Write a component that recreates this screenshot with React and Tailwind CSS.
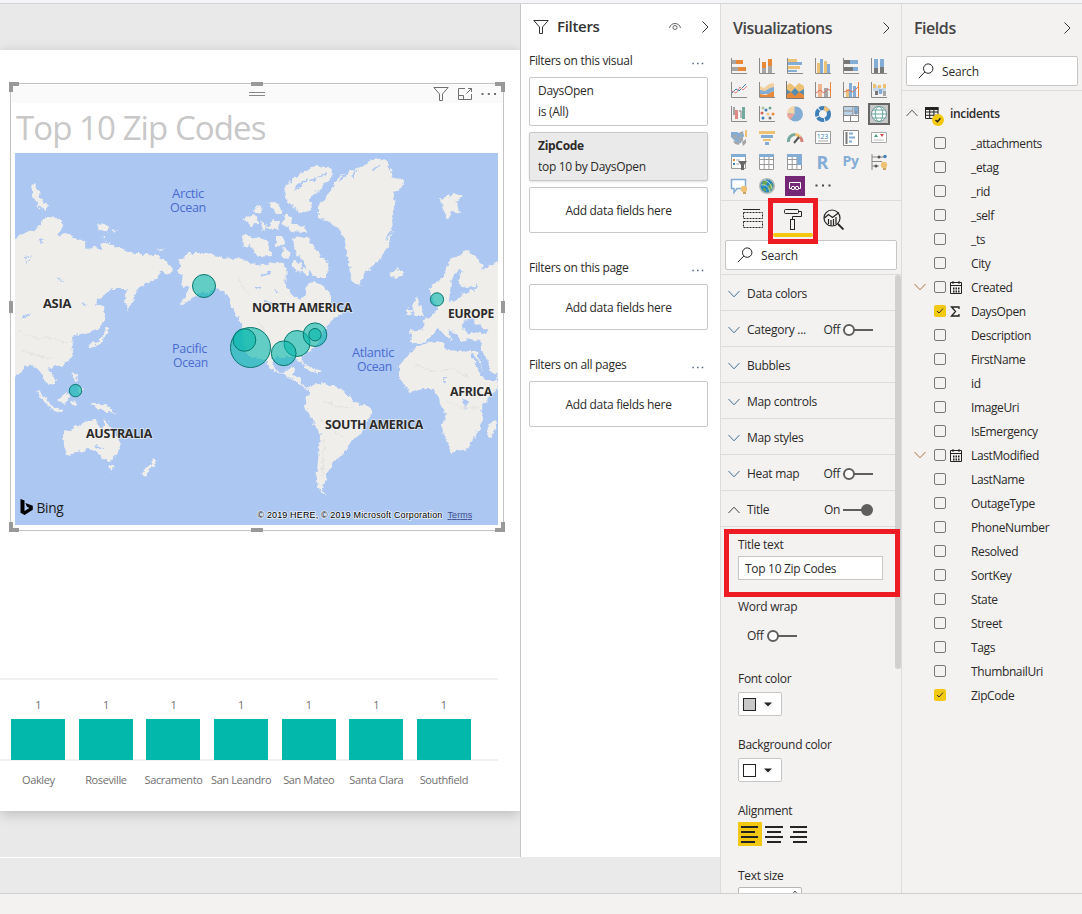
import React from "react";

const LAND = [
  "15,238 27,232 33,230 41,225 46,217 52,216 60,220 63,227 58,236 66,232 77,239 84,240 86,249 94,248 101,249 103,241 116,246 128,251 140,254 156,255 167,263 173,270 169,275 162,271 156,278 148,283 138,288 133,300 128,310 125,300 127,289 113,289 101,297 95,304 104,308 106,317 100,327 90,333 80,334 72,337 73,347 72,357 63,365 48,368 56,380 52,386 47,383 42,377 40,371 32,365 25,367 16,376 5,378 5,238",
  "31,186 36,185 39,192 40,198 48,206 46,211 40,208 34,199",
  "97,225 104,224 110,227 107,231 99,230", "110,229 117,230 114,232",
  "100,236 106,237 106,240", "157,249 164,248 162,251",
  "57,400 63,395 68,392 69,398 65,404 58,402",
  "72,372 76,374 77,382 74,379", "79,386 83,390 80,393 78,390",
  "90,402 100,404 108,406 115,414 107,412 101,411 95,406",
  "72,400 77,402 75,407 71,405",
  "63,433 78,425 88,420 97,419 98,426 103,428 105,418 109,425 115,433 121,443 117,455 110,461 102,459 97,452 88,449 80,452 67,455 64,445",
  "108,466 114,466 111,471",
  "151,457 156,461 155,466 150,468 145,477 141,475 149,465 152,463",
  "180,260 190,253 207,253 220,257 230,259 240,258 250,263 262,265 275,262 283,263 287,270 286,277 285,285 293,297 301,300 305,295 308,283 317,282 325,287 330,297 333,306 342,314 336,317 330,323 324,329 320,338 315,347 307,353 302,357 304,365 300,361 294,357 285,357 271,358 275,369 283,374 287,369 294,367 293,375 300,377 302,385 309,387 316,386 308,390 300,384 291,378 280,374 271,369 265,360 257,359 248,355 242,340 242,327 238,317 231,307 227,294 217,288 208,292 203,291 190,300 179,306 185,298 190,288 181,285 183,277 178,271",
  "318,207 328,195 335,183 340,176 353,170 365,165 375,158 387,161 390,170 392,178 405,181 402,188 393,193 395,203 392,217 393,230 387,247 383,257 367,270 360,285 353,285 350,270 347,257 345,240 340,230 330,222 318,217",
  "284,187 300,173 317,165 332,169 331,179 318,190 310,198 312,210 300,213 293,207 287,200",
  "292,238 308,237 317,250 330,267 325,278 318,278 310,272 303,260 296,254",
  "242,234 252,237 267,240 272,256 258,257 250,245 244,248", "243,219 254,215 260,222 251,226 247,222",
  "258,206 263,208 260,214 253,211", "269,202 278,203 283,214 276,214", "285,214 292,217 291,228 282,226",
  "272,219 279,221 278,230 267,228", "289,224 305,226 306,232 289,231", "276,236 283,236 284,244 276,247", "283,246 291,252 288,260 282,255",
  "308,284 318,284 321,296 313,296", "303,267 310,269 307,276 302,272", "292,261 299,262 303,271 296,273", "262,222 267,224 266,231 261,228",
  "389,273 398,269 404,273 397,278 391,277",
  "440,199 447,197 453,193 463,196 456,202 460,213 453,211 448,219 443,208",
  "430,288 443,277 450,260 467,251 480,260 482,270 498,261 510,260 510,450 498,387 497,380 490,370 485,355 480,350 470,351 460,350 443,343 430,342 420,343 411,342 410,331 425,329 423,320 432,315 438,309 434,300 431,297",
  "412,306 417,296 420,305 425,316 415,316", "408,309 413,310 411,316 406,314",
  "417,346 428,343 443,343 446,350 463,351 478,352 480,362 486,379 497,380 497,388 482,406 483,420 475,437 467,449 451,453 442,428 446,414 440,404 439,396 433,389 422,389 410,392 399,379 399,367 407,356",
  "495,419 497,424 492,438 487,436 488,426",
  "310,386 322,383 337,387 350,396 353,402 371,408 371,414 363,426 362,433 350,442 345,451 338,459 332,463 332,467 327,474 325,482 321,489 327,496 319,491 316,480 318,460 320,434 312,419 305,407 308,397",
];
const WATER = [
  "451,281 457,269 463,270 459,281 464,288 474,287 478,283 478,288 464,293 456,300 449,302",
  "464,321 472,318 476,324 490,330 484,334 468,333 462,328",
  "430,337 438,328 446,336 452,341 447,328 455,333 463,343 467,338 482,342 480,351 463,351 448,349 443,342 425,342",
  "470,354 473,353 487,377 497,374 498,380 484,380",
  "463,398 468,402 465,410",
  "443,375 446,378 444,384",
];
const LINES = ["107,328 105,335 100,342 90,346", "38,391 45,400 52,408 63,411", "304,366 311,369 320,372", "302,322 307,319 305,326"];
const BUBBLES = [[204, 286, 11.5], [250.5, 347.5, 20], [244.5, 340, 11.3], [297, 343.5, 13], [315, 334.7, 11.8], [315, 334.7, 6.2], [283.7, 353.3, 12.4], [437, 299.4, 6.6], [75.5, 390.6, 6.2]];
const PLACES = [[43, 308, 28, "ASIA"], [252, 312, 100, "NORTH AMERICA"], [448, 318, 46, "EUROPE"], [450, 396, 42, "AFRICA"], [325, 429, 98, "SOUTH AMERICA"], [86, 438, 66, "AUSTRALIA"]];
const SEAS = [
  [[172, 198, 32, "Arctic"], [170, 212, 36, "Ocean"]],
  [[172, 353, 35, "Pacific"], [173, 367, 35, "Ocean"]],
  [[352, 356.5, 42, "Atlantic"], [357, 370.5, 35, "Ocean"]],
];

function WorldMap() {
  return (
    <svg className="block h-[372px] w-[483px]" viewBox="15 153 483 372">
      <defs>
        <filter id="coast" x="-5%" y="-5%" width="110%" height="110%">
          <feTurbulence type="fractalNoise" baseFrequency="0.22" numOctaves="3" seed="4" />
          <feDisplacementMap in="SourceGraphic" scale="6" xChannelSelector="R" yChannelSelector="G" />
          <feGaussianBlur stdDeviation="0.35" />
        </filter>
      </defs>
      <rect x="15" y="153" width="483" height="372" fill="#acc7f2" />
      <g filter="url(#coast)">
        {LAND.map((p) => <polygon key={p} points={p} fill="#efeeeb" />)}
        {WATER.map((p) => <polygon key={p} points={p} fill="#acc7f2" />)}
        {LINES.map((p) => <polyline key={p} points={p} fill="none" stroke="#efeeeb" strokeWidth="3" />)}
        <path d="M15 330l20 8 18 0 14 6M20 350l18 6 14 2M320 420l12 8 10 10M322 400l14 6 16 2M415 365l18 6 20-2 16 8M445 400l16 8 18 0M258 320l8 14M236 275l12 20M324 440l-2 36" fill="none" stroke="#e2e1de" strokeWidth="1" />
        <path d="M25 258l6-2M26 262l4-1M56 279l7 2M82 303l4 2M22 318l8-4M40 240l3 2M262 275l9-3M274 291l5 2M264 302l7 1M255 287l5 2M327 173l-16 8M308 178l-14 12M340 180l8-8M352 178l4-8M372 170l8-5M386 240l6-10M95 446l8 2" fill="none" stroke="#acc7f2" strokeWidth="1.8" />
      </g>
      {BUBBLES.map(([x, y, r], i) => <circle key={i} cx={x} cy={y} r={r} fill="#01b8aa" fillOpacity="0.6" stroke="#08786f" strokeWidth="1" />)}
      {PLACES.map(([x, y, w, t]) => <text key={t} x={x} y={y} textLength={w} lengthAdjust="spacingAndGlyphs" fill="#2b2b2b" stroke="#f5f5f3" strokeWidth="1.5" strokeOpacity="0.7" paintOrder="stroke" className="font-['Open_Sans',sans-serif] text-[12px] font-bold">{t}</text>)}
      {SEAS.map((lines, i) => (
        <text key={i} fill="#4a6bd0" className="font-['Open_Sans',sans-serif] text-[12px]">
          {lines.map(([x, y, w, t]) => <tspan key={t} x={x} y={y} textLength={w} lengthAdjust="spacingAndGlyphs">{t}</tspan>)}
        </text>
      ))}
      <path d="M20.5 499l4 1.5v10.5l5-3-2.500-1.200-1.600-3.800 7.400 2.700v4l-8.300 5.300-4-2.200z" fill="#000" />
      <text x="36.5" y="513" textLength="27" lengthAdjust="spacingAndGlyphs" fill="#1b1b1b" className="font-['Open_Sans',sans-serif] text-[14.5px]">Bing</text>
      <text x="257.5" y="518" textLength="184.500" fill="#000" stroke="#fff" strokeWidth="1.6" strokeOpacity="0.7" paintOrder="stroke" className="font-['Liberation_Sans',sans-serif] text-[9px]">© 2019 HERE, © 2019 Microsoft Corporation</text>
      <text x="447.500" y="518" textLength="24.5" fill="#3b4a8c" textDecoration="underline" className="font-['Liberation_Sans',sans-serif] text-[9px]">Terms</text>
    </svg>
  );
}

const Funnel = ({ className }) => (
  <svg className={className} viewBox="0 0 16 16" fill="none" stroke="currentColor"><path d="M.8 1.5h14.4L9.5 8v6.500h-3V8z" /></svg>
);
const Dots = ({ className }) => (
  <svg className={className} viewBox="0 0 16 4" fill="currentColor"><rect x="0.500" y="1" width="2" height="2" /><rect x="6.800" y="1" width="2" height="2" /><rect x="13" y="1" width="2" height="2" /></svg>
);
const Right = () => <svg className="h-3 w-[8px]" viewBox="0 0 8 12" fill="none" stroke="#333"><path d="M1.500 .5L7 6 1.500 11.500" /></svg>;
const Chev = ({ up, color = "#3f6f96" }) => (
  <svg className="h-2 w-3" viewBox="0 0 12 8" fill="none" stroke={color}><path d={up ? "M.5 7L6 1.200 11.500 7" : "M.5 1L6 6.800 11.500 1"} /></svg>
);
const Lens = () => <svg className="h-4 w-4" viewBox="0 0 16 16" fill="none" stroke="#222"><circle cx="10.200" cy="5.600" r="4.700" /><path d="M6.800 9L.8 15.200" /></svg>;

function Visual() {
  return (
    <div className="relative mt-[33px] ml-[10px] h-[448px] w-[494px] border border-[#c4c4c4] bg-white">
      <div className="flex h-[19px] items-center bg-[#fafafa] text-[#6f6f6f]">
        <div className="ml-[238px] h-[4px] w-4 border-y border-[#888]" />
        <div className="ml-auto flex items-center gap-[9px] pr-[6px]">
          <Funnel className="h-4 w-4" />
          <svg className="h-[14px] w-[14px]" viewBox="0 0 14 14" fill="none" stroke="currentColor"><path d="M7 1.500H.5v11h13V7M.5 8.500h5v4M8.500 6.500l5-5M10 1.500h3.500V5" /></svg>
          <Dots className="h-1 w-4" />
        </div>
      </div>
      <div className="ml-[5px] flex h-[49px] items-center whitespace-nowrap font-['Open_Sans',sans-serif] text-[33px] tracking-[-0.920px] text-[#c8c8c8]">Top 10 Zip Codes</div>
      <div className="mt-px ml-[4px]"><WorldMap /></div>
      <span className="absolute -top-[2px] -left-[2px] h-[10px] w-[10px] border-t-4 border-l-4 border-[#999]" />
      <span className="absolute -top-[2px] -right-[2px] h-[10px] w-[10px] border-t-4 border-r-4 border-[#999]" />
      <span className="absolute -bottom-[2px] -left-[2px] h-[10px] w-[10px] border-b-4 border-l-4 border-[#999]" />
      <span className="absolute -right-[2px] -bottom-[2px] h-[10px] w-[10px] border-r-4 border-b-4 border-[#999]" />
      <span className="absolute -top-[2px] left-[240px] h-1 w-3 bg-[#999]" />
      <span className="absolute -bottom-[2px] left-[240px] h-1 w-3 bg-[#999]" />
      <span className="absolute top-[217px] -left-[2px] h-3 w-1 bg-[#999]" />
      <span className="absolute top-[217px] -right-[2px] h-3 w-1 bg-[#999]" />
    </div>
  );
}

const CITIES = ["Oakley", "Roseville", "Sacramento", "San Leandro", "San Mateo", "Santa Clara", "Southfield"];
function Chart() {
  return (
    <div className="mt-[147px] w-[498px] border-t-2 border-[#f1f1f1] text-[11px] text-[#707070]">
      <div className="flex h-[81px] items-end border-b-2 border-[#f1f1f1] pl-[4.500px]">
        {CITIES.map((c) => (
          <div key={c} className="flex w-[67.600px] shrink-0 flex-col items-center">
            <span className="mb-[6px] leading-4">1</span>
            <div className="-mb-px h-[41px] w-[54px] bg-[#01b8aa]" />
          </div>
        ))}
      </div>
      <div className="flex pt-[11px] pl-[4.500px]">
        {CITIES.map((c) => <span key={c} className="w-[67.600px] shrink-0 text-center leading-4 tracking-[-0.380px] whitespace-nowrap">{c}</span>)}
      </div>
    </div>
  );
}

const FilterHead = ({ children }) => (
  <div className="flex h-4 items-center justify-between pr-1"><span>{children}</span><Dots className="mt-1 h-[3px] w-[12px] text-[#4b6588]" /></div>
);
const AddField = () => <div className="flex h-[46px] items-center justify-center rounded-[2px] border border-[#c8c8c8] bg-white pt-[2px]">Add data fields here</div>;

function Filters() {
  return (
    <section className="h-[853px] w-[200px] shrink-0 border-l border-[#c8c8c8] bg-white pr-3 pl-2">
      <div className="flex h-[45px] items-center pl-1">
        <Funnel className="h-4 w-4 text-[#333]" />
        <h2 className="ml-2 text-[15px] font-semibold tracking-[-0.300px] text-[#333]">Filters</h2>
        <svg className="ml-auto h-3 w-3" viewBox="0 0 12 12" fill="none" stroke="#666"><path d="M.5 7C1.500 1 10.500 1 11.500 7" /><circle cx="6" cy="6.500" r="2" /></svg>
        <span className="ml-[20px] -mr-[1px]"><Right /></span>
      </div>
      <div className="mt-1"><FilterHead>Filters on this visual</FilterHead></div>
      <div className="mt-2 flex h-[49px] flex-col justify-center rounded-[2px] border border-[#c8c8c8] pb-[2px] pl-2 leading-[21px]"><span>DaysOpen</span><span>is (All)</span></div>
      <div className="mt-[6px] flex h-[49px] flex-col justify-center rounded-[2px] border border-[#c8c8c8] bg-[#eaeaea] pb-[2px] pl-2 leading-[21px] shadow-sm"><b className="font-bold">ZipCode</b><span>top 10 by DaysOpen</span></div>
      <div className="mt-[6px]"><AddField /></div>
      <div className="mt-[27px]"><FilterHead>Filters on this page</FilterHead></div>
      <div className="mt-2"><AddField /></div>
      <div className="mt-[27px]"><FilterHead>Filters on all pages</FilterHead></div>
      <div className="mt-2"><AddField /></div>
    </section>
  );
}

const O = "#e8893a", B = "#84add6", G = "#a6a6a6", D = "#777", Y = "#eec274", N = "#3d7fb8";
const Ax = () => <path d="M1.500 1v15.500H17" fill="none" stroke="#8a8a8a" />;
const R = ({ x, y, w, h, f }) => <rect x={x} y={y} width={w} height={h} fill={f} />;
const TableIcon = ({ accent }) => <g><path d="M1.500 1.500h14v15h-14zM1.500 6.500h14M1.500 11.500h14M6.200 1.500v15M10.900 1.500v15" fill="#fff" stroke="#999" /><R x={1} y={1} w={15} h={3} f={B} />{accent && <R x={11} y={4} w={5} h={8} f={B} />}</g>;
const ICONS = [
  <><Ax /><R x={2} y={3} w={4} h={4} f={G} /><R x={6} y={3} w={7} h={4} f={O} /><R x={2} y={10} w={6} h={4} f={G} /><R x={8} y={10} w={8} h={4} f={O} /></>,
  <><Ax /><R x={4} y={5} w={4} h={6} f={O} /><R x={4} y={11} w={4} h={5} f={G} /><R x={10} y={2} w={4} h={7} f={O} /><R x={10} y={9} w={4} h={7} f={G} /></>,
  <><Ax /><R x={2} y={2} w={9} h={3} f={Y} /><R x={2} y={5} w={14} h={3} f={B} /><R x={2} y={9} w={12} h={3} f={Y} /><R x={2} y={13} w={9} h={2} f={B} /></>,
  <><Ax /><R x={3} y={6} w={3} h={10} f={Y} /><R x={6} y={2} w={3} h={14} f={B} /><R x={10} y={4} w={3} h={12} f={Y} /><R x={13} y={7} w={3} h={9} f={B} /></>,
  <><Ax /><R x={2} y={3} w={6} h={4} f={D} /><R x={8} y={3} w={8} h={4} f={B} /><R x={2} y={10} w={9} h={4} f={D} /><R x={11} y={10} w={5} h={4} f={B} /></>,
  <><Ax /><R x={4} y={2} w={4} h={9} f={B} /><R x={4} y={11} w={4} h={5} f={D} /><R x={10} y={2} w={4} h={8} f={B} /><R x={10} y={10} w={4} h={6} f={D} /></>,
  <><Ax /><path d="M2 12l4-4 3 2 7-7" fill="none" stroke={N} /><path d="M2 10l4 2 4-6 3 3 4-4" fill="none" stroke="#e18b86" /></>,
  <><Ax /><path d="M2 5l4 2 5-4 5-1v7l-5 3-5-1-4 1z" fill="#f2cf9c" /><path d="M2 9l5 1 5-3 4-1v4l-5 3H2z" fill={B} /><path d="M2 13l6 1 8-4v6H2z" fill={O} /></>,
  <><path d="M0 5l4-3 5 4 4-4 5 3v7H0z" fill={Y} /><path d="M0 8l5 3 4-4 4 4 5-3v8H0z" fill="#548cb3" /><path d="M0 14l5-3 4 4 4-4 5 3v3H0z" fill={O} /><path d="M.5 0v17.500H18" fill="none" stroke="#777" /></>,
  <><Ax /><R x={4} y={3} w={4} h={13} f="#efb68d" /><R x={10} y={7} w={4} h={9} f={G} /><path d="M2 12l4-3 4 3 4-4 3 2" fill="none" stroke="#df6f61" /><path d="M16.500 1v15" stroke={O} /></>,
  <><Ax /><R x={4} y={8} w={3} h={8} f={Y} /><R x={7} y={2} w={3} h={14} f={B} /><R x={11} y={5} w={3} h={11} f={B} /><path d="M2 11l5-2 4 2 5-5" fill="none" stroke="#df6f61" /><path d="M16.500 1v15" stroke={O} /></>,
  <><Ax /><path d="M3 4h3l5 4 5-3v4l-5 4-5-3H3z" fill="#c8d7e5" /><R x={3} y={3} w={3} h={4} f={Y} /><R x={8} y={4} w={3} h={3} f={Y} /><R x={13} y={3} w={3} h={4} f={Y} /><R x={5} y={10} w={3} h={4} f={D} /><R x={9} y={8} w={3} h={5} f={B} /><R x={13} y={10} w={3} h={5} f={G} /></>,
  <><Ax /><R x={3} y={2} w={2} h={8} f={G} /><R x={5} y={5} w={3} h={9} f="#df8a83" /><R x={9} y={6} w={3} h={8} f="#fff" /><path d="M9 6h2v7" stroke={D} fill="none" /><R x={12} y={2} w={3} h={12} f="#72aaa0" /></>,
  <><Ax />{[[4, 8, "#d16359"], [12, 3, "#6da79a"], [5, 13, N], [8, 5, N], [10, 9, Y], [15, 9, O], [12, 13, D], [5, 3, "#a8c5a0"]].map(([x, y, f]) => <circle key={x + "-" + y} cx={x} cy={y} r="1.500" fill={f} />)}</>,
  <><circle cx="9.500" cy="9" r="7.500" fill={B} /><path d="M8.500 9V1A7.500 7.500 0 001 8z" fill="#f3d7aa" /><path d="M8.500 9L1 8.500a8 8 0 003.500 6.500z" fill="#e8a49a" /></>,
  <><circle cx="9" cy="9" r="6" fill="none" stroke={N} strokeWidth="4" strokeDasharray="7 1" /><path d="M10 3a6 6 0 014 3" stroke={Y} strokeWidth="4" fill="none" /></>,
  <><path d="M1.500 1.500h15v15h-15z" fill="#fff" /><R x={2} y={2} w={9} h={8} f="#bcd2e7" /><R x={12} y={2} w={4} h={7} f={B} /><path d="M1.500 1.500h15v15h-15zM1.500 6h9M1.500 10.500h15M11 1.500v9M8.500 10.500v6M14 6v4" fill="none" stroke="#888" /></>,
  <g fill="none" stroke="#64a59a"><circle cx="9" cy="9" r="7.500" fill="#fff" stroke="#73939a" /><ellipse cx="9" cy="9" rx="3.800" ry="7.500" /><path d="M1.500 9h15M3 5h12M3 13h12" /></g>,
  <><path d="M1 3h6l2 1 4-2 1 5-2 3-1 4-4 1-3-4-3-3z" fill={B} /><path d="M2 6h5v3l-3 1zM8 8h5v4l-4 1zM10 3h3v3h-3z" fill="#a4a9ac" /><path d="M3 12l6 1v3l-4-1zM12 13l4-3v4l-3 3z" fill={G} /><R x={15} y={1} w={2} h={7} f={Y} /></>,
  <><R x={1} y={2} w={16} h={3} f={Y} /><R x={3} y={6} w={12} h={3} f={B} /><R x={5} y={10} w={8} h={2} f={Y} /><R x={7} y={13} w={4} h={3} f={B} /></>,
  <><path d="M2.500 13A6.500 6.500 0 019 5.500" stroke="#76aaa0" strokeWidth="3" fill="none" /><path d="M9 5.500A6.500 6.500 0 0114 8" stroke={Y} strokeWidth="3" fill="none" /><path d="M14 8a7 7 0 012 5" stroke="#d58378" strokeWidth="3" fill="none" /><path d="M8 14l5-6" stroke="#555" strokeWidth="2" /></>,
  <><path d="M1.500 2.500h15v12h-15z" fill="#fff" stroke="#999" /><text x="2.800" y="9.500" fill={N} className="font-['Open_Sans',sans-serif] text-[7px]">123</text><path d="M4 12h10" stroke="#aaa" /></>,
  <><path d="M1.500 1.500h15v15h-15z" fill="#fff" stroke="#888" /><path d="M4.500 3v12" stroke="#777" strokeWidth="2" /><path d="M7 4.500h4M7 8.500h6M7 12.500h3" stroke={B} strokeWidth="2" /></>,
  <><path d="M1.500 3.500h15v10h-15z" fill="#fff" stroke="#aaa" /><path d="M4 8l2-3 2 3z" fill="#4b9a7d" /><path d="M10 5h4l-2 3z" fill="#cf4d43" /><path d="M4 11h10" stroke="#bbb" /></>,
  <><path d="M1.500 1.500h14v14h-14z" fill="#fff" stroke="#999" /><R x={1} y={1} w={15} h={3} f={B} /><R x={3} y={6} w={2} h={2} f={O} /><R x={3} y={10} w={2} h={2} f={N} /><path d="M6 7h4M6 11h3" stroke="#aaa" /><path d="M8 8h9l-3 4v5h-3v-5z" fill="#666" /></>,
  <TableIcon />, <TableIcon accent />,
  <text x="2.500" y="15.500" fill={B} className="font-['Open_Sans',sans-serif] text-[18px] font-bold">R</text>,
  <text x="0.500" y="13" fill={B} className="font-['Open_Sans',sans-serif] text-[14px] font-bold">Py</text>,
  <><path d="M2 1v16M2 4h13M2 8.500h10M2 13h7" stroke="#888" fill="none" /><circle cx="15" cy="3.500" r="1.700" fill={N} /><circle cx="9" cy="4" r="1.500" fill="#555" /><circle cx="6" cy="13" r="1.500" fill="#555" /><circle cx="14" cy="12" r="3.200" fill={Y} /><R x={13} y={15} w={3} h={2} f="#c9a361" /></>,
  <><path d="M1.500 2.500h14v9H7l-3 4v-4H1.500z" fill="#fff" stroke={B} strokeWidth="1.500" /><circle cx="14" cy="12" r="3.200" fill={Y} /><R x={13} y={15} w={3} h={2} f="#c9a361" /></>,
  <><circle cx="9" cy="9" r="8" fill="#b5b9b5" /><circle cx="9" cy="9" r="6.500" fill="#268ac0" /><path d="M5 4l5 0-2 4-4 1zM10 9l4-3 1 5-4 4zM5 11l3 1 0 3-3-2z" fill="#6fa552" /><path d="M3 8c5-1 8 2 9 7M6 3c4 1 7 4 8 9" fill="none" stroke="#e7eff0" strokeWidth="0.700" /></>,
  <><R x={-1} y={-1} w={20} h={20} f="#742774" /><path d="M5 11.500H3.500v-6h11v6H13" fill="none" stroke="#fff" /><circle cx="7" cy="11" r="1.700" fill="none" stroke="#fff" /><circle cx="11" cy="11" r="1.700" fill="none" stroke="#fff" /></>,
  <g fill="#444"><rect x="1.500" y="7.500" width="2" height="2" /><rect x="8" y="7.500" width="2" height="2" /><rect x="14.500" y="7.500" width="2" height="2" /></g>,
];

const Toggle = ({ on }) => (
  <span className="flex items-center gap-[3px]"><span>{on ? "On" : "Off"}</span>
    <svg className="h-3 w-[30px]" viewBox="0 0 30 12" stroke="#605e5c" strokeWidth="2">{on ? <><path d="M0 6h20" /><circle cx="24" cy="6" r="5" fill="#605e5c" /></> : <><path d="M11 6h19" /><circle cx="6" cy="6" r="5" fill="#fff" /></>}</svg>
  </span>
);
const SECTIONS = [["Data colors"], ["Category ...", "off"], ["Bubbles"], ["Map controls"], ["Map styles"], ["Heat map", "off"], ["Title", "on"]];
const Swatch = ({ gray }) => (
  <div className="flex h-6 w-11 items-center rounded-[2px] border border-[#c8c6c4] bg-white pl-1">
    <span className={gray ? "h-[13px] w-[13px] border border-[#222] bg-[#c8c8c8]" : "h-[13px] w-[13px] border border-[#222] bg-white"} />
    <svg className="ml-2 h-[5px] w-2" viewBox="0 0 8 5"><path d="M0 .5h8L4 4.500z" fill="#222" /></svg>
  </div>
);
const Align = ({ d, active }) => (
  <span className={active ? "flex h-6 w-6 items-center justify-center bg-[#f2c811]" : "flex h-6 w-6 items-center justify-center"}><svg className="h-[18px] w-[18px]" viewBox="0 0 18 18" stroke="#252423" strokeWidth="2"><path d={d} /></svg></span>
);
const Search = () => <div className="flex h-[30px] w-[172px] items-center gap-2 rounded-[2px] border border-[#c8c6c4] bg-white pl-[11px]"><Lens /><span className="pt-[2px] tracking-[-0.200px]">Search</span></div>;

function Visualizations() {
  return (
    <section className="relative h-[889px] w-[181px] shrink-0 overflow-hidden border-l border-[#dcdcdc] bg-[#f3f2f1]">
      <div className="flex h-[50px] items-center justify-between pr-[11px] pl-3"><h2 className="pb-[2px] text-[16px] font-semibold tracking-[-0.500px] text-[#444]">Visualizations</h2><span className="pb-[2px]"><Right /></span></div>
      <div className="ml-1 grid h-[146px] auto-rows-[24px] grid-cols-[repeat(6,28px)]">
        {ICONS.map((icon, i) => (
          <div key={i} className="flex items-center justify-center">
            <span className={i === 17 ? "flex h-[22px] w-[22px] items-center justify-center border-2 border-[#666] bg-[#c8c8c8]" : "flex h-[22px] w-[22px] items-center justify-center"}><svg className="h-[18px] w-[18px] shrink-0 overflow-visible" viewBox="0 0 18 18">{icon}</svg></span>
          </div>
        ))}
      </div>
      <div className="flex h-[40px] items-start gap-5 border-t border-[#dcdcdc] pt-2 pl-[22px] text-[#252423]">
        <svg className="h-5 w-5" viewBox="0 0 20 20" fill="none" stroke="currentColor"><path d="M0 .5h17" /><path d="M.5 3.500v6h19v-6M.5 12.500v6h19v-6M.5 3.500h19M.5 12.500h19" strokeDasharray="2 1" /></svg>
        <svg className="h-[22px] w-5" viewBox="0 0 20 22" fill="none" stroke="currentColor"><rect x="1.500" y="0.500" width="14" height="4" rx="1" /><path d="M15.500 2.500h3v5h-9v3" /><rect x="7.500" y="10.500" width="4" height="10" /></svg>
        <svg className="h-[21px] w-[21px]" viewBox="0 0 21 21" fill="none" stroke="currentColor" strokeWidth="1.200"><circle cx="9" cy="9" r="8" /><path d="M15 15l5.500 5.500" strokeWidth="1.800" /><path d="M1.500 9l4-3.500 4 3 6.500-5M5.500 10v5M8 11v6M10.500 10v6.500M13 8v7" /></svg>
      </div>
      <div className="flex h-[34px] items-start pl-1"><Search /></div>
      <div className="border-t border-[#dcdcdc]">
        {SECTIONS.map(([name, state]) => (
          <div key={name} className="flex h-9 items-center border-b border-[#dcdcdc] pt-[2px] pl-[7px]">
            <Chev up={state === "on"} color={state === "on" ? "#444" : "#3f6f96"} /><span className="ml-[7px] flex-1">{name}</span>
            {state && <span className="mr-[28px]"><Toggle on={state === "on"} /></span>}
          </div>
        ))}
      </div>
      <div className="flex flex-col items-start pt-[10px] pl-[17px] leading-4">
        <span>Title text</span>
        <div className="mt-[3px] flex h-6 w-[145px] items-center border border-[#c8c6c4] bg-white pt-[2px] pl-[6px]">Top 10 Zip Codes</div>
        <span className="mt-[19px]">Word wrap</span>
        <div className="mt-[13px] ml-[9px]"><Toggle /></div>
        <span className="mt-[27px]">Font color</span>
        <div className="mt-[5px]"><Swatch gray /></div>
        <span className="mt-[21px]">Background color</span>
        <div className="mt-[5px]"><Swatch /></div>
        <span className="mt-[21px]">Alignment</span>
        <div className="mt-[3px] flex"><Align active d="M0 2h17M0 7h14M0 12h17M0 17h14" /><Align d="M0 2h18M2 7h14M0 12h18M2 17h14" /><Align d="M1 2h17M4 7h14M1 12h17M4 17h14" /></div>
        <span className="mt-[22px]">Text size</span>
        <div className="mt-[3px] flex h-6 w-16 justify-end rounded-[2px] border border-[#b8b6b4] bg-white pt-[2px] pr-[3px]"><svg className="h-[5px] w-[6px]" viewBox="0 0 6 5" fill="none" stroke="#555"><path d="M.5 4L3 1l2.500 3" /></svg></div>
      </div>
      <span className="absolute top-[271px] right-0 h-[394px] w-[6px] rounded-[3px] bg-[#d2d0ce]" />
      <span className="absolute top-[229px] left-[52px] h-1 w-10 rounded-full bg-[#f2c811]" />
      <span className="absolute top-[194px] left-[47px] h-[46px] w-[50px] border-5 border-[#ed1c24]" />
      <span className="absolute top-[525px] left-[3px] h-[68px] w-[176px] border-5 border-[#ed1c24]" />
    </section>
  );
}

const FIELDS = ["_attachments", "_etag", "_rid", "_self", "_ts", "City", "Created", "DaysOpen", "Description", "FirstName", "id", "ImageUri", "IsEmergency", "LastModified", "LastName", "OutageType", "PhoneNumber", "Resolved", "SortKey", "State", "Street", "Tags", "ThumbnailUri", "ZipCode"];
const DATES = ["Created", "LastModified"];
const CHECKED = ["DaysOpen", "ZipCode"];
function Fields() {
  return (
    <section className="h-[889px] w-[181px] shrink-0 border-l border-[#dcdcdc] bg-[#f3f2f1]">
      <div className="flex h-[52px] items-start justify-between pt-[12px] pr-[11px] pl-3"><h2 className="text-[16px] leading-6 font-semibold tracking-[-0.450px] text-[#444]">Fields</h2><span className="pt-[6px]"><Right /></span></div>
      <div className="h-[35px] border-b border-[#dcdcdc] pl-[4px]"><Search /></div>
      <div className="mt-[10px] flex h-6 items-center pl-1">
        <Chev up color="#555" />
        <span className="relative ml-[7px]">
          <svg className="h-3 w-[14px]" viewBox="0 0 14 12"><path d="M.5.500h12.500v11H.5zM.5 5h12.500M.5 8.300h12.500M4.700 3v9M8.900 3v9" fill="none" stroke="#222" /><rect width="13.500" height="3" fill="#222" /></svg>
          <svg className="absolute top-[7px] left-[7px] h-3 w-3" viewBox="0 0 12 12"><circle cx="6" cy="6" r="6" fill="#f2c811" /><path d="M3.500 6l2 1.800 3-3.500" fill="none" stroke="#222" strokeWidth="1.400" /></svg>
        </span>
        <span className="ml-[11px] pt-px font-semibold tracking-[-0.350px]">incidents</span>
      </div>
      <div className="mt-[6px]">
        {FIELDS.map((f) => (
          <div key={f} className="flex h-6 items-center pl-3">
            <span className="flex w-5">{DATES.includes(f) && <Chev color="#ad6f3b" />}</span>
            {CHECKED.includes(f) ? <span className="flex h-3 w-3 items-center justify-center rounded-[2px] bg-[#f2c811]"><svg className="h-2 w-2" viewBox="0 0 8 8" fill="none" stroke="#333"><path d="M1 4l2 2 4-4.500" /></svg></span> : <span className="h-3 w-3 rounded-[2px] border border-[#777]" />}
            <span className="ml-1 flex w-[21px]">
              {DATES.includes(f) && <svg className="h-[13px] w-3" viewBox="0 0 12 13"><path d="M.5 1.500h11v11H.5zM.5 4.500h11M3 0v3M9 0v3" fill="none" stroke="#222" /><path d="M3 7.500h7M3 10.500h7" stroke="#222" strokeWidth="2" strokeDasharray="1.500 1" /></svg>}
              {f === "DaysOpen" && <svg className="h-[11px] w-[10px]" viewBox="0 0 10 11" fill="none" stroke="#222" strokeWidth="1.300"><path d="M9 3V1H1.500L5.500 5.500 1.500 10H9V8" /></svg>}
            </span>
            <span className="pt-[2px] tracking-[-0.380px]">{f}</span>
          </div>
        ))}
      </div>
    </section>
  );
}

export default function App() {
  return (
    <div className="h-[914px] w-[1082px] overflow-hidden bg-[#f3f2f1] font-['Open_Sans',sans-serif] text-[12px] tracking-[-0.300px] whitespace-nowrap text-[#2b2a29]">
      <div className="h-1 border-b border-[#d6d6d6] bg-[#f3f5f8]" />
      <main className="flex h-[889px] bg-[#eaeaea]">
        <div className="h-[854px] w-[520px] shrink-0 overflow-hidden border-b border-white bg-[#e9e9e9] pt-[46px]">
          <div className="flow-root h-[761px] bg-white shadow-[0_3px_12px_rgba(0,0,0,0.200)]"><Visual /><Chart /></div>
        </div>
        <Filters /><Visualizations /><Fields />
      </main>
      <footer className="h-[21px] border-t border-[#cfcfcf] bg-[#f3f2f0]" />
    </div>
  );
}
